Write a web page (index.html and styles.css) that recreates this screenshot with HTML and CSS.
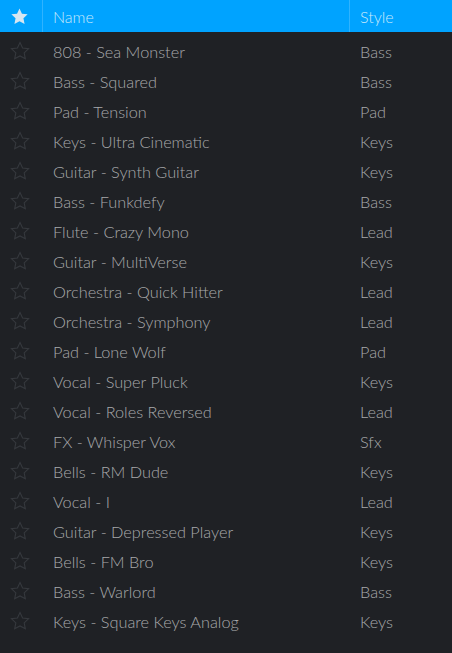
FILE: index.html
```html
<!DOCTYPE html>
<html>
<head>
<meta charset="utf-8">
<link rel="stylesheet" href="styles.css">
</head>
<body>
<div class="table">
  <div class="head row">
    <div class="c-star"><svg width="19" height="19" viewBox="0 0 24 24"><path class="star-fill" d="M12 1.8l3.1 6.6 7.2.9-5.3 5 1.4 7.1L12 17.9l-6.4 3.5 1.4-7.1-5.3-5 7.2-.9z"/></svg></div>
    <div class="c-name">Name</div>
    <div class="c-style">Style</div>
  </div>
  <div class="body" id="body"></div>
</div>
<script>
const data=[["808 - Sea Monster","Bass"],["Bass - Squared","Bass"],["Pad - Tension","Pad"],["Keys - Ultra Cinematic","Keys"],["Guitar - Synth Guitar","Keys"],["Bass - Funkdefy","Bass"],["Flute - Crazy Mono","Lead"],["Guitar - MultiVerse","Keys"],["Orchestra - Quick Hitter","Lead"],["Orchestra - Symphony","Lead"],["Pad - Lone Wolf","Pad"],["Vocal - Super Pluck","Keys"],["Vocal - Roles Reversed","Lead"],["FX - Whisper Vox","Sfx"],["Bells - RM Dude","Keys"],["Vocal - I","Lead"],["Guitar - Depressed Player","Keys"],["Bells - FM Bro","Keys"],["Bass - Warlord","Bass"],["Keys - Square Keys Analog","Keys"]];
const b=document.getElementById('body');
b.innerHTML=data.map(d=>`<div class="row item"><div class="c-star"><svg width="20" height="20" viewBox="0 0 24 24"><path class="star-line" d="M12 1.8l3.1 6.6 7.2.9-5.3 5 1.4 7.1L12 17.9l-6.4 3.5 1.4-7.1-5.3-5 7.2-.9z"/></svg></div><div class="c-name">${d[0]}</div><div class="c-style">${d[1]}</div></div>`).join('');
</script>
</body>
</html>
```
FILE: styles.css
```css
html,body{margin:0;padding:0;background:#1f2125;}
body{font-family:Lato,"Noto Sans",sans-serif;width:452px;height:653px;overflow:hidden;}
.table{display:flex;flex-direction:column;}
.row{display:flex;align-items:center;}
.head{height:32px;background:#00a3ff;color:#c9e9fb;font-size:16px;font-weight:300;}
.head .c-star,.head .c-name{border-right:1px solid #2fb3ff;}
.c-star{width:43px;display:flex;justify-content:center;align-items:center;height:100%;box-sizing:border-box;padding-right:3px;}
.c-name{width:307px;padding-left:10px;box-sizing:border-box;height:100%;display:flex;align-items:center;}
.c-style{flex:1;padding-left:10px;display:flex;align-items:center;height:100%;}
.body{padding-top:4px;}
.item{height:30px;color:#a8a9ab;font-size:16.3px;font-weight:300;}
.star-fill{fill:#d6e6f1;}
.star-line{fill:none;stroke:#36393e;stroke-width:1.3;stroke-linejoin:miter;}
```
